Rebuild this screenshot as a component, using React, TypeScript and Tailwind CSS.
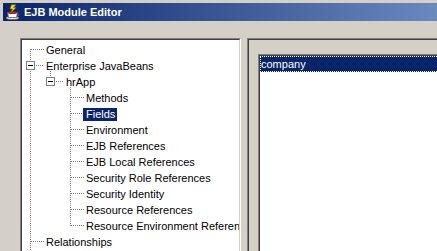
import React from "react";

type Node = { label: string; level: number; selected?: boolean };

const nodes: Node[] = [
  { label: "General", level: 0 },
  { label: "Enterprise JavaBeans", level: 0 },
  { label: "hrApp", level: 1 },
  { label: "Methods", level: 2 },
  { label: "Fields", level: 2, selected: true },
  { label: "Environment", level: 2 },
  { label: "EJB References", level: 2 },
  { label: "EJB Local References", level: 2 },
  { label: "Security Role References", level: 2 },
  { label: "Security Identity", level: 2 },
  { label: "Resource References", level: 2 },
  { label: "Resource Environment References", level: 2 },
  { label: "Relationships", level: 0 },
];

const indent: Record<number, string> = {
  0: "ml-[21px]",
  1: "ml-[41px]",
  2: "ml-[61px]",
};

// dotted connector pieces, 1px dots every 2px
function vdots(x: number, y1: number, y2: number) {
  const out: React.ReactNode[] = [];
  for (let y = y1; y <= y2; y += 2) out.push(<rect key={`v${x}-${y}`} x={x} y={y} width={1} height={1} />);
  return out;
}

function hdots(y: number, x1: number, x2: number) {
  const out: React.ReactNode[] = [];
  for (let x = x1; x <= x2; x += 2) out.push(<rect key={`h${y}-${x}`} x={x} y={y} width={1} height={1} />);
  return out;
}

function Expander({ x, y }: { x: number; y: number }) {
  return (
    <g>
      <rect x={x + 0.5} y={y + 0.5} width={8} height={8} fill="#fff" stroke="#808080" />
      <rect x={x + 2} y={y + 4} width={5} height={1} fill="#000" />
    </g>
  );
}

function TreeLines() {
  const childRows = [57, 73, 89, 105, 121, 137, 153, 169, 185];
  return (
    <svg className="absolute left-0 top-0" width={218} height={230} shapeRendering="crispEdges">
      <g fill="#808080">
        {vdots(8, 9, 20)}
        {vdots(8, 31, 229)}
        {hdots(9, 9, 21)}
        {hdots(25, 14, 21)}
        {hdots(201, 9, 21)}
        {vdots(28, 31, 36)}
        {hdots(41, 34, 41)}
        {vdots(48, 47, 185)}
        {childRows.map((y) => hdots(y, 49, 61))}
      </g>
      <Expander x={4} y={21} />
      <Expander x={24} y={37} />
    </svg>
  );
}

function JavaIcon() {
  return (
    <svg width="16" height="16" viewBox="0 0 16 16">
      <ellipse cx="7.5" cy="14" rx="6.5" ry="1.6" fill="#e8e8e8" stroke="#606060" strokeWidth="0.8" />
      <path d="M2.5 8.5 L12.5 8.5 L11.5 13.5 L3.5 13.5 Z" fill="#ffffff" stroke="#606060" strokeWidth="0.8" />
      <path d="M12.3 9.5 C14.6 9.5 14.6 12.3 11.8 12.3" fill="none" stroke="#606060" strokeWidth="1" />
      <ellipse cx="7.5" cy="8.8" rx="4.8" ry="1.3" fill="#b02818" />
      <path d="M6.5 0.8 L11 0.8 L8.4 3.6 L11.2 3.6 L6 8.4 L7.6 4.9 L5 4.9 Z" fill="#ffe818" stroke="#8a6a00" strokeWidth="0.6" />
    </svg>
  );
}

export default function App() {
  return (
    <div
      className="w-[437px] h-[251px] overflow-hidden bg-[#d4d0c8] pt-[3px] pl-[3px] flex flex-col"
      style={{ fontFamily: '"Liberation Sans", Arial, sans-serif' }}
    >
      <div className="h-[18px] shrink-0 flex items-center pl-[2px] bg-[linear-gradient(to_right,#0a246a,#6a89bf)]">
        <JavaIcon />
        <span className="ml-[3px] text-[11px] font-bold text-white leading-none">EJB Module Editor</span>
      </div>

      <div className="mt-[17px] flex pl-[17px] gap-[6px] shrink-0">
        {/* tree panel */}
        <div className="w-[221px] h-[230px] shrink-0 border border-t-[#808080] border-l-[#808080] border-r-white border-b-white">
          <div className="relative h-full bg-white border border-t-[#404040] border-l-[#404040] border-r-[#d4d0c8] border-b-[#d4d0c8] overflow-hidden">
            <TreeLines />
            <ul className="relative pt-[2px]">
              {nodes.map((n) => (
                <li key={n.label} className="h-[16px] flex items-center whitespace-nowrap">
                  <span
                    className={`${indent[n.level]} h-[13px] flex items-center pl-[3px] pr-[2px] text-[11px] leading-none ${
                      n.selected ? "bg-[#0a246a] text-white" : "text-black"
                    }`}
                  >
                    {n.label}
                  </span>
                </li>
              ))}
            </ul>
          </div>
        </div>

        {/* fields panel */}
        <div className="w-[230px] h-[230px] shrink-0 border-t border-l border-[#808080] shadow-[inset_1px_1px_0_#404040] pl-[10px] pt-[15px]">
          <div className="h-full border border-t-[#808080] border-l-[#808080] border-r-white border-b-white">
            <div className="h-full bg-white border border-t-[#404040] border-l-[#404040] border-r-[#d4d0c8] border-b-[#d4d0c8]">
              <div className="h-[16px] flex items-center bg-[#0a246a] border border-dotted border-white text-[11px] text-white leading-none">
                company
              </div>
            </div>
          </div>
        </div>
      </div>
    </div>
  );
}
